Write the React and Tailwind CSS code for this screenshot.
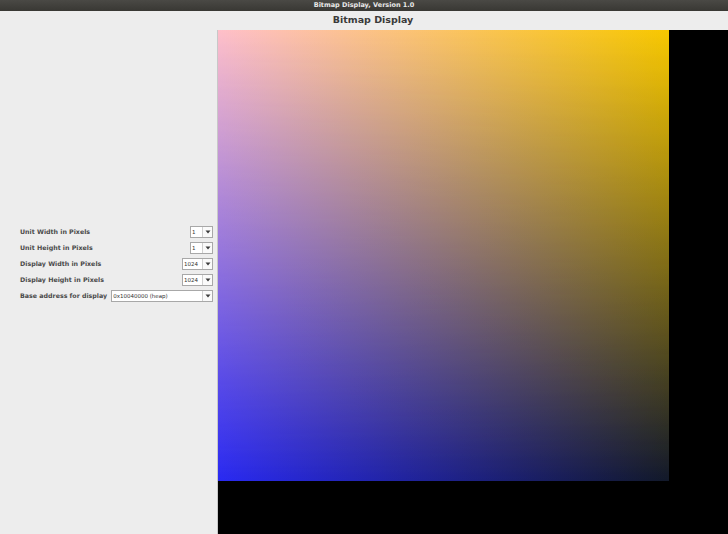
import React from 'react';

const ROWS = [
  { label: 'Unit Width in Pixels', value: '1', w: 'w-[23px]' },
  { label: 'Unit Height in Pixels', value: '1', w: 'w-[23px]' },
  { label: 'Display Width in Pixels', value: '1024', w: 'w-[31px]' },
  { label: 'Display Height in Pixels', value: '1024', w: 'w-[31px]' },
];

function Combo({ value, className }) {
  return (
    <div className={`flex h-[12px] border border-[#a8a8a8] bg-white ${className}`}>
      <div className="flex-1 px-[1px] text-[5.5px] leading-[10px] text-[#333]">{value}</div>
      <div className="flex w-[10px] items-center justify-center border-l border-[#d0d0d0] bg-[#fafafa]">
        <svg width="6" height="4" viewBox="0 0 6 4">
          <path d="M0.5 0.5 L5.5 0.5 L3 3.5 Z" fill="#3c3c3c" />
        </svg>
      </div>
    </div>
  );
}

function Gradient() {
  return (
    <svg width="451" height="451" viewBox="0 0 451 451" className="block">
      <defs>
        <linearGradient id="top" x1="0" y1="0" x2="1" y2="0">
          <stop offset="0" stopColor="#ffc0ca" />
          <stop offset="1" stopColor="#f8c800" />
        </linearGradient>
        <linearGradient id="bottom" x1="0" y1="0" x2="1" y2="0">
          <stop offset="0" stopColor="#2a2af2" />
          <stop offset="1" stopColor="#12192a" />
        </linearGradient>
        <linearGradient id="fade" x1="0" y1="0" x2="0" y2="1">
          <stop offset="0" stopColor="#fff" />
          <stop offset="1" stopColor="#000" />
        </linearGradient>
        <mask id="m">
          <rect width="451" height="451" fill="url(#fade)" />
        </mask>
      </defs>
      <rect width="451" height="451" fill="url(#bottom)" />
      <rect width="451" height="451" fill="url(#top)" mask="url(#m)" />
    </svg>
  );
}

export default function App() {
  return (
    <div className="flex h-[534px] w-[728px] flex-col overflow-hidden bg-[#ededed] font-['DejaVu_Sans',sans-serif]">
      {/* window title */}
      <div className="flex h-[11px] items-center justify-center bg-gradient-to-b from-[#4a4945] to-[#393834] text-[6.5px] font-bold text-[#e8e8e8]">
        Bitmap Display, Version 1.0
      </div>

      <div className="flex h-[19px] items-center justify-center pl-[18px] text-[9.5px] font-bold text-[#3a3a3a]">
        Bitmap Display
      </div>

      <div className="flex flex-1">
        {/* settings */}
        <div className="w-[218px] border-r border-[#c8c8c8] pl-[20px] pr-[4px] pt-[196px]">
          <div className="flex flex-col gap-[4px]">
            {ROWS.map(r => (
              <div key={r.label} className="flex items-center justify-between">
                <span className="text-[6.3px] font-bold text-[#4a4a4a]">{r.label}</span>
                <Combo value={r.value} className={r.w} />
              </div>
            ))}
            <div className="flex items-center gap-[4px]">
              <span className="text-[6.3px] font-bold text-[#4a4a4a]">Base address for display</span>
              <Combo value="0x10040000 (heap)" className="flex-1" />
            </div>
          </div>
        </div>

        {/* canvas */}
        <div className="flex-1 bg-black">
          <Gradient />
        </div>
      </div>
    </div>
  );
}
